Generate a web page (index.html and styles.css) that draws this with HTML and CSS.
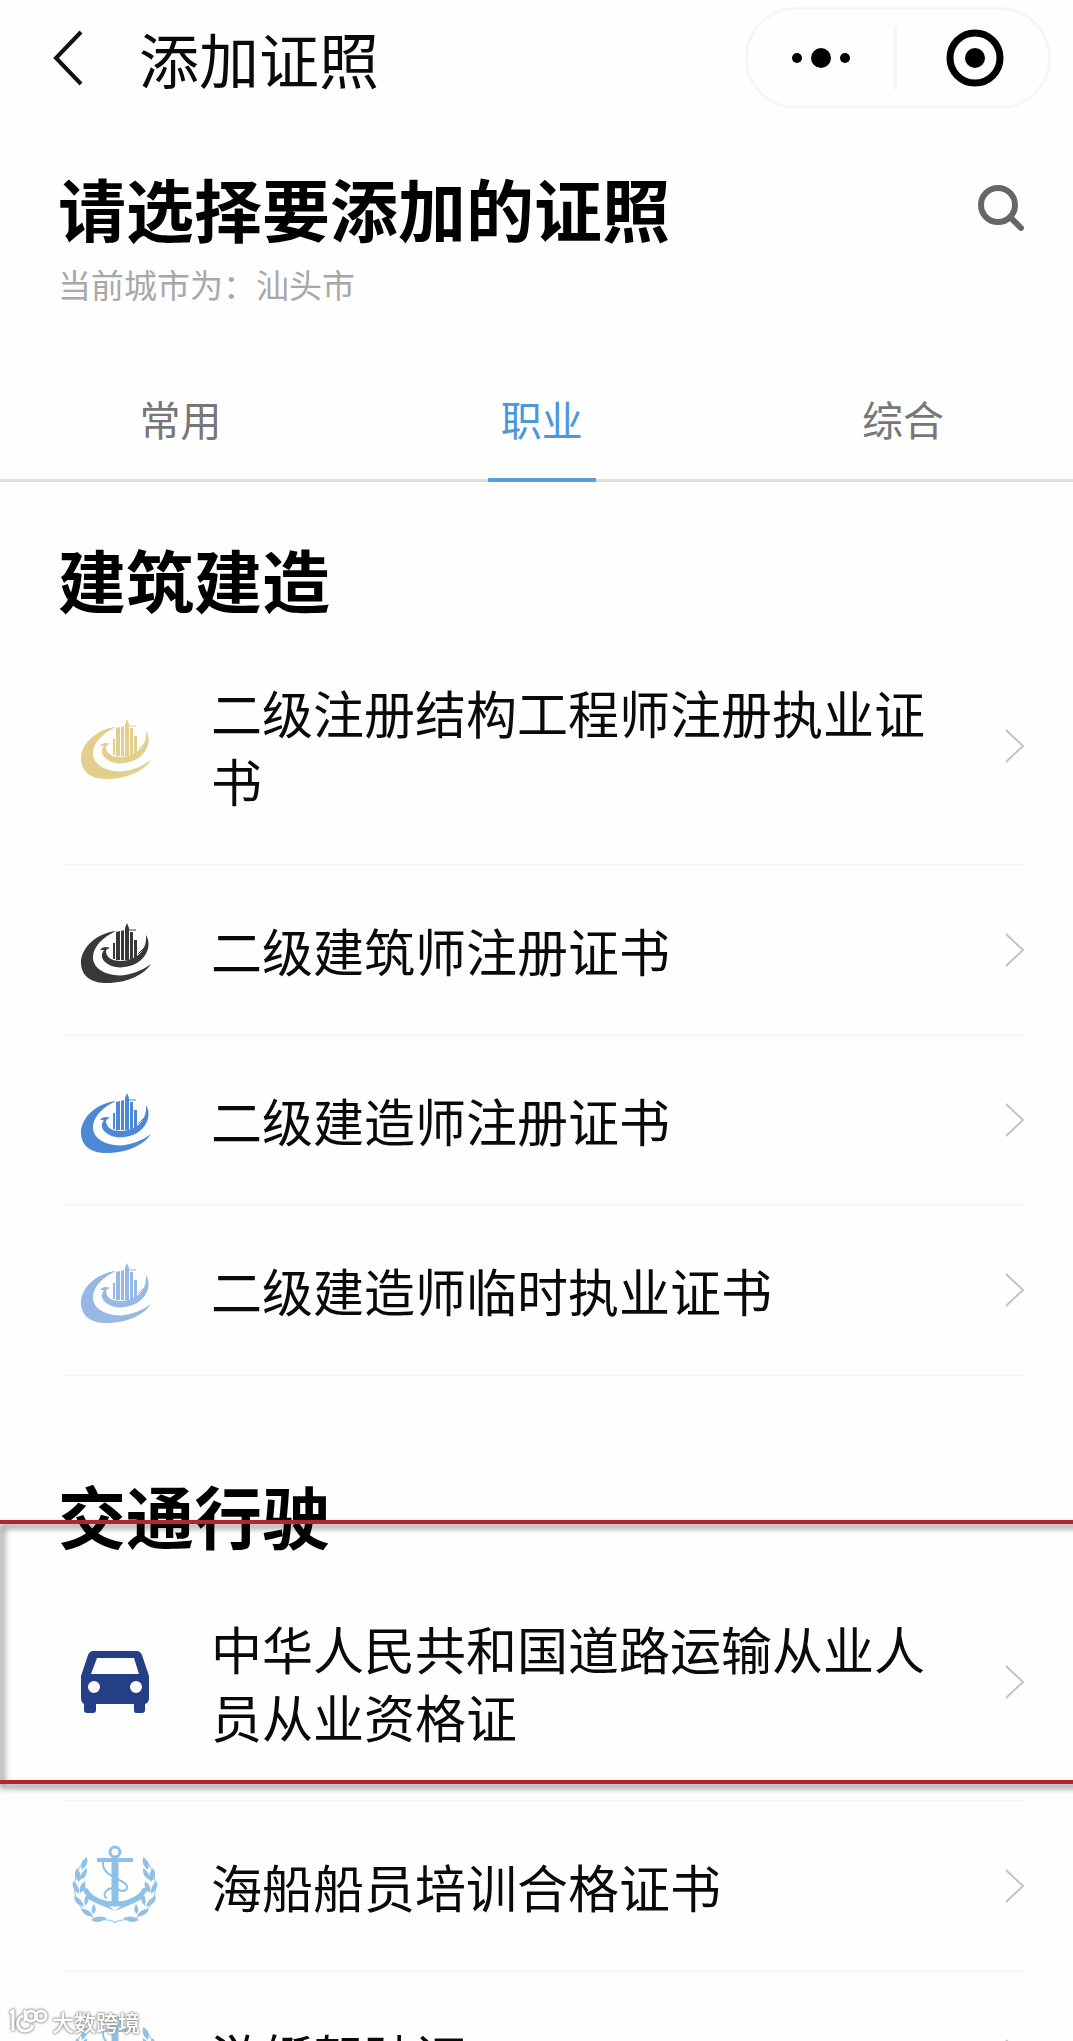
FILE: index.html
```
<!DOCTYPE html>
<html lang="zh-CN">

<head>
    <meta charset="UTF-8">
    <meta name="viewport" content="width=device-width, initial-scale=1.0">
    <title>添加证照</title>
    <link rel="stylesheet" href="styles.css">
</head>

<body>

    <!-- 图标 -->
    <svg class="sprite" aria-hidden="true">
        <symbol id="icon-building" viewBox="-2 -1 90 90">
            <path fill="currentColor" d="M44 25C25 27 8 42 9 58C10 72 22 78 38 77C56 76 72 69 79 58C68 66 54 71 42 69C28 67 20 59 21 50C22 40 31 31 44 25Z" />
            <path fill="currentColor" d="M28 44C30 41 34 40 38 42C34 43 33 45 35 49C38 55 47 56 56 54C68 51 75 42 74 29C80 39 75 51 65 57C54 63 40 63 33 56C29 52 29 48 32 44Z" />
            <path fill="currentColor" d="M41 37H43V53H41ZM44 26L48 25V54H44ZM49 25L52 24V54H49ZM53 22L55 17L57 22V54H53ZM58 26H61V53H58ZM62 34H65V52L62 53Z" />
            <path fill="none" stroke="currentColor" stroke-width="1" d="M56 24H64M66 48L74 40" />
        </symbol>
        <symbol id="icon-car" viewBox="0 0 90 90">
            <path fill="currentColor" fill-rule="evenodd" d="M23 14H67Q70 14 72 18L79 39V61Q79 66 75 67V73Q75 76 72 76H66Q64 76 64 73V67H26V73Q26 76 23 76H17Q14 76 14 73V67Q11 65 11 61V39L18 18Q20 14 23 14ZM27 21L21 37H69L64 21ZM24 44A6 6 0 1 0 24 56A6 6 0 1 0 24 44ZM66 44A6 6 0 1 0 66 56A6 6 0 1 0 66 44Z" />
        </symbol>
        <symbol id="icon-anchor" viewBox="0 0 90 90">
            <g fill="none" stroke="currentColor">
                <circle cx="45" cy="11" r="5" stroke-width="3" />
                <path stroke-width="4" d="M27 19H63" />
                <path stroke-width="7" d="M45 17V64" />
                <path stroke-width="5" d="M15 48C24 68 66 68 75 48" />
                <path stroke-width="2" d="M34 17C29 31 43 35 49 39C62 44 57 53 49 49C36 43 31 56 37 57" />
                <path stroke-width="1" d="M16 17C-1 36 1 64 22 76C29 80 39 77 46 82M74 17C91 36 89 64 68 76C61 80 51 77 44 82" />
            </g>
            <g fill="currentColor">
                <path d="M45 70L28 63L18 58L13 44L22 54L32 59Z" />
                <path d="M45 70L62 63L72 58L77 44L68 54L58 59Z" />
                <path d="M17 16Q9 20 12 29Q19 24 17 16ZM7 27Q2 34 9 41Q13 34 7 27ZM17 27Q10 31 10 39Q18 36 17 27ZM3 40Q1 48 9 53Q10 45 3 40ZM15 40Q8 45 10 52Q17 49 15 40ZM4 55Q4 63 14 66Q12 57 4 55ZM17 53Q13 58 15 65Q21 60 17 53ZM11 68Q14 76 23 75Q19 67 11 68ZM24 63Q20 68 23 73Q28 70 24 63ZM21 79Q28 84 37 77Q28 73 21 79Z" />
                <path d="M73 16Q81 20 78 29Q71 24 73 16ZM83 27Q88 34 81 41Q77 34 83 27ZM73 27Q80 31 80 39Q72 36 73 27ZM87 40Q89 48 81 53Q80 45 87 40ZM75 40Q82 45 80 52Q73 49 75 40ZM86 55Q86 63 76 66Q78 57 86 55ZM73 53Q77 58 75 65Q69 60 73 53ZM79 68Q76 76 67 75Q71 67 79 68ZM66 63Q70 68 67 73Q62 70 66 63ZM69 79Q62 84 53 77Q62 73 69 79Z" />
            </g>
        </symbol>
        <symbol id="icon-arrow" viewBox="0 0 20 36">
            <path fill="none" stroke="currentColor" stroke-width="2" d="M1 2L18 18L1 34" />
        </symbol>
    </svg>

    <header class="navbar">
        <button type="button" class="back" aria-label="返回">
            <svg viewBox="0 0 32 56"><path d="M29 2L4 28L29 54" /></svg>
        </button>
        <div class="nav-title">添加证照</div>
        <div class="capsule">
            <button type="button" aria-label="更多">
                <svg viewBox="0 0 64 64">
                    <circle cx="8" cy="32" r="5" />
                    <circle cx="32" cy="32" r="10" />
                    <circle cx="56" cy="32" r="5" />
                </svg>
            </button>
            <button type="button" aria-label="关闭">
                <svg viewBox="0 0 64 64">
                    <circle cx="32" cy="32" r="25" class="ring" />
                    <circle cx="32" cy="32" r="10" />
                </svg>
            </button>
        </div>
    </header>

    <div class="heading">
        <div>
            <h1>请选择要添加的证照</h1>
            <p class="city">当前城市为：汕头市</p>
        </div>
        <button type="button" class="search" aria-label="搜索">
            <svg viewBox="0 0 48 48"><circle cx="21" cy="21" r="17" /><path d="M33 33L44 44" /></svg>
        </button>
    </div>

    <nav class="tabs">
        <div class="tab-list">
            <a href="#common">常用</a>
            <a href="#job" class="active">职业</a>
            <a href="#general">综合</a>
        </div>
    </nav>

    <main>
        <section class="group">
            <h2>建筑建造</h2>
            <a href="#" class="item">
                <svg class="logo gold"><use href="#icon-building" /></svg>
                <span class="name">二级注册结构工程师注册执业证书</span>
                <svg class="arrow"><use href="#icon-arrow" /></svg>
            </a>
            <a href="#" class="item">
                <svg class="logo black"><use href="#icon-building" /></svg>
                <span class="name">二级建筑师注册证书</span>
                <svg class="arrow"><use href="#icon-arrow" /></svg>
            </a>
            <a href="#" class="item">
                <svg class="logo blue"><use href="#icon-building" /></svg>
                <span class="name">二级建造师注册证书</span>
                <svg class="arrow"><use href="#icon-arrow" /></svg>
            </a>
            <a href="#" class="item">
                <svg class="logo light-blue"><use href="#icon-building" /></svg>
                <span class="name">二级建造师临时执业证书</span>
                <svg class="arrow"><use href="#icon-arrow" /></svg>
            </a>
        </section>

        <section class="group">
            <h2>交通行驶</h2>
            <a href="#" class="item">
                <svg class="logo navy"><use href="#icon-car" /></svg>
                <span class="name">中华人民共和国道路运输从业人员从业资格证</span>
                <svg class="arrow"><use href="#icon-arrow" /></svg>
            </a>
            <a href="#" class="item">
                <svg class="logo sky"><use href="#icon-anchor" /></svg>
                <span class="name">海船船员培训合格证书</span>
                <svg class="arrow"><use href="#icon-arrow" /></svg>
            </a>
            <a href="#" class="item">
                <svg class="logo sky"><use href="#icon-anchor" /></svg>
                <span class="name">游艇驾驶证</span>
                <svg class="arrow"><use href="#icon-arrow" /></svg>
            </a>
            <!-- 红框标注 -->
            <div class="mark"></div>
        </section>
    </main>

    <div class="watermark">
        <svg viewBox="0 0 40 28">
            <path d="M2 6L5 4V24M15 9C7 11 8 24 17 24Q23 24 25 18M17 3V14" />
            <circle cx="23" cy="9" r="5" />
            <circle cx="33" cy="9" r="5" />
        </svg>
        <span>大数跨境</span>
    </div>

</body>

</html>
```
FILE: styles.css
```
* {
    box-sizing: border-box;
}

body {
    font-family: "Noto Sans CJK SC", sans-serif;
    margin: 0;
    height: 100vh;
    overflow: hidden;
    position: relative;
    background-color: #fefefe;
    color: #0a0a0a;
}

button {
    background: none;
    border: none;
    padding: 0;
    cursor: pointer;
}

a {
    color: inherit;
    text-decoration: none;
}

svg {
    display: block;
    flex: none;
}

h1,
h2,
p {
    margin: 0;
}

.sprite {
    position: absolute;
    width: 0;
    height: 0;
}

.navbar {
    display: flex;
    align-items: center;
    height: 116px;
    padding: 0 22px 0 52px;
}

.back svg {
    width: 32px;
    height: 56px;
    fill: none;
    stroke: #111;
    stroke-width: 4px;
}

.nav-title {
    flex: 1;
    margin-left: 55px;
    font-size: 60px;
    line-height: 80px;
}

.capsule {
    display: flex;
    align-items: center;
    width: 306px;
    height: 102px;
    border: 3px solid #f6f6f6;
    border-radius: 51px;
}

.capsule button {
    flex: 1;
    display: flex;
    justify-content: center;
}

.capsule button + button {
    padding-left: 6px;
    border-left: 3px solid #f6f6f6;
}

.capsule svg {
    width: 64px;
    height: 64px;
}

.capsule .ring {
    fill: none;
    stroke: #000;
    stroke-width: 7px;
}

.heading {
    display: flex;
    justify-content: space-between;
    align-items: flex-start;
    padding: 46px 48px 0 58px;
}

h1,
h2 {
    color: #000;
    font-size: 68px;
    font-weight: 700;
    line-height: 92px;
}

.city {
    margin-top: 6px;
    color: #a8a8a8;
    font-size: 33px;
    line-height: 48px;
}

.search {
    margin-top: 22px;
}

.search svg {
    width: 48px;
    height: 48px;
    fill: none;
    stroke: #666;
    stroke-width: 6px;
    stroke-linecap: round;
}

.tabs {
    margin-top: 50px;
    border-bottom: 3px solid #dedede;
}

.tab-list {
    display: flex;
    width: 101%;
}

.tab-list a {
    flex: 1;
    display: flex;
    flex-direction: column;
    align-items: center;
    padding-top: 30px;
    color: #777;
    font-size: 41px;
    line-height: 60px;
}

.tab-list a::after {
    content: "";
    width: 108px;
    height: 4px;
    margin-top: 30px;
    margin-bottom: -3px;
}

.tab-list .active {
    color: #4b97dc;
}

.tab-list .active::after {
    background-color: #5a9fdc;
}

.group {
    position: relative;
    padding: 51px 48px 0 58px;
}

.group + .group {
    padding-top: 93px;
}

h2 {
    margin-bottom: 3px;
}

.item {
    display: flex;
    align-items: center;
    margin-left: 6px;
    border-bottom: 2px solid #f6f6f6;
}

.logo {
    width: 90px;
    height: 90px;
    margin-left: 6px;
}

.name {
    flex: 1;
    padding: 50px 60px 50px 51px;
    font-size: 51px;
    line-height: 68px;
}

.arrow {
    width: 20px;
    height: 36px;
    color: #c4c4c4;
}

.gold {
    color: #e3cf8d;
}

.black {
    color: #38383a;
}

.blue {
    color: #4c88d4;
}

.light-blue {
    color: #95b8e4;
}

.navy {
    color: #243f86;
}

.sky {
    color: #8fc1e8;
}

.mark {
    position: absolute;
    top: 144px;
    left: -4px;
    right: -8px;
    height: 264px;
    border: 4px solid #b0262a;
    filter: drop-shadow(4px 4px 3px rgba(0, 0, 0, 0.5));
    pointer-events: none;
}

.watermark {
    position: absolute;
    left: 8px;
    bottom: 4px;
    display: flex;
    align-items: center;
    gap: 4px;
    color: #fff;
    font-size: 22px;
    font-weight: 500;
    line-height: 32px;
    filter: drop-shadow(0 0 1px #888) drop-shadow(0 0 1px #aaa);
}

.watermark svg {
    width: 40px;
    height: 28px;
    fill: none;
    stroke: #fff;
    stroke-width: 3px;
}
```
